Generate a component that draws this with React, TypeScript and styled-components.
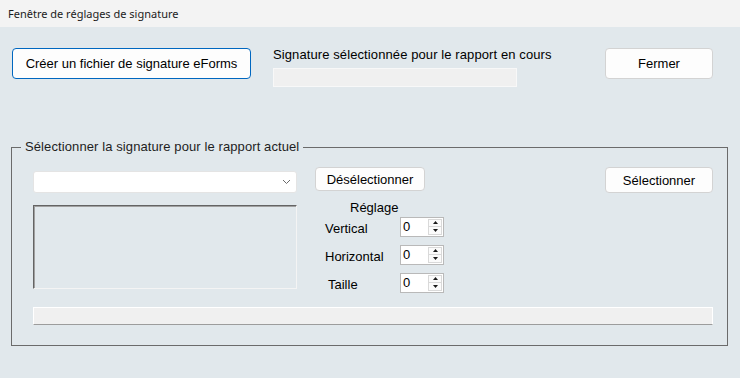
import React, { FC } from "react";
import styled, { createGlobalStyle } from "styled-components";

const GlobalStyle = createGlobalStyle`
  html, body {
    margin: 0;
    padding: 0;
    background: #e1e8ec;
  }
`;

const Window = styled.div`
  width: 740px;
  height: 378px;
  overflow: hidden;
  background: #e1e8ec;
  font-family: "Liberation Sans", Arial, sans-serif;
  font-size: 13px;
  color: #000;
`;

const TitleBar = styled.div`
  height: 27px;
  display: flex;
  align-items: center;
  padding-left: 8px;
  background: #f3f3f3;
  font-family: "Noto Sans", sans-serif;
  font-size: 11px;
  color: #1b1b1b;
`;

const Body = styled.div`
  padding: 21px 0 0 11px;
`;

const TopRow = styled.div`
  display: flex;
  align-items: flex-start;
  padding-left: 1px;
`;

const Button = styled.button<{ $w: number; $h: number; $focused?: boolean }>`
  box-sizing: border-box;
  width: ${(p) => p.$w}px;
  height: ${(p) => p.$h}px;
  padding: 0;
  background: #fdfdfd;
  border: 1px solid ${(p) => (p.$focused ? "#0067c0" : "#d3d3d3")};
  border-radius: 4px;
  font: inherit;
  color: #000;
  white-space: nowrap;
`;

const CurrentColumn = styled.div`
  display: flex;
  flex-direction: column;
  width: 244px;
  margin-left: 22px;
  margin-right: 88px;
`;

const Caption = styled.div`
  line-height: 14px;
  white-space: nowrap;
  letter-spacing: 0.1px;
`;

const ReadOnlyBox = styled.div`
  box-sizing: border-box;
  height: 19px;
  margin-top: 6px;
  background: #f0f0f0;
  border: 1px solid #f8f8f8;
`;

const Group = styled.fieldset`
  box-sizing: border-box;
  width: 717px;
  margin: 52px 0 0;
  padding: 0;
  border: 1px solid #6b6b6b;
`;

const Legend = styled.legend`
  margin-left: 9px;
  padding: 0 4px;
  line-height: 16px;
  color: #1e1e1e;
  letter-spacing: 0.1px;
`;

const GroupContent = styled.div`
  padding: 12px 14px 20px 21px;
`;

const MainRow = styled.div`
  display: flex;
  align-items: flex-start;
`;

const LeftColumn = styled.div`
  display: flex;
  flex-direction: column;
  width: 264px;
`;

const Combo = styled.div`
  box-sizing: border-box;
  height: 22px;
  margin-top: 4px;
  display: flex;
  align-items: center;
  justify-content: flex-end;
  padding-right: 5px;
  background: #fff;
  border: 1px solid #e4e4e4;
  border-radius: 3px;
`;

const PictureBox = styled.div`
  box-sizing: border-box;
  height: 84px;
  margin-top: 12px;
  border: 1px solid;
  border-color: #646464 #f4f4f4 #f4f4f4 #646464;
  box-shadow: inset 1px 1px 0 #a0a0a0;
`;

const MiddleColumn = styled.div`
  display: flex;
  flex-direction: column;
  width: 130px;
  margin-left: 18px;
`;

const SettingsTitle = styled.div`
  margin-top: 9px;
  padding-left: 35px;
  line-height: 15px;
`;

const SpinList = styled.div`
  display: flex;
  flex-direction: column;
  gap: 9px;
  margin-top: 2px;
`;

const SpinRow = styled.div`
  display: flex;
  align-items: center;
  height: 19px;
`;

const SpinLabel = styled.span<{ $indent: number }>`
  box-sizing: border-box;
  width: 85px;
  padding-left: ${(p) => p.$indent}px;
  padding-top: 4px;
`;

const SpinBox = styled.div`
  box-sizing: border-box;
  width: 44px;
  height: 20px;
  display: flex;
  align-items: stretch;
  background: #fff;
  border: 1px solid #b9b9b9;
`;

const SpinValue = styled.span`
  flex: 1;
  padding-left: 2px;
  line-height: 18px;
`;

const SpinButtons = styled.div`
  display: flex;
  flex-direction: column;
  width: 14px;
  margin: 1px 1px 1px 0;
`;

const SpinButton = styled.div`
  flex: 1;
  display: flex;
  align-items: center;
  justify-content: center;
  background: #fbfbfb;
  border: 1px solid #d9d9d9;

  & + & {
    border-top: none;
  }
`;

const RightSlot = styled.div`
  margin-left: auto;
`;

const StatusBar = styled.div`
  box-sizing: border-box;
  height: 18px;
  margin-top: 15px;
  background: #f0f0f0;
  border: 1px solid;
  border-color: #ffffff #ffffff #9c9c9c #ffffff;
`;

const Chevron: FC = () => (
  <svg width="9" height="6" viewBox="0 0 9 6">
    <polyline points="1,1 4.5,4.5 8,1" fill="none" stroke="#6a6a6a" strokeWidth="1" />
  </svg>
);

const Arrow: FC<{ up?: boolean }> = ({ up }) => (
  <svg width="5" height="3" viewBox="0 0 5 3">
    <polygon points={up ? "0,3 5,3 2.5,0" : "0,0 5,0 2.5,3"} fill="#1a1a1a" />
  </svg>
);

interface SpinProps {
  label: string;
  indent: number;
  value: number;
}

const Spin: FC<SpinProps> = ({ label, indent, value }) => (
  <SpinRow>
    <SpinLabel $indent={indent}>{label}</SpinLabel>
    <SpinBox>
      <SpinValue>{value}</SpinValue>
      <SpinButtons>
        <SpinButton>
          <Arrow up />
        </SpinButton>
        <SpinButton>
          <Arrow />
        </SpinButton>
      </SpinButtons>
    </SpinBox>
  </SpinRow>
);

const App: FC = () => {
  return (
    <Window>
      <GlobalStyle />
      <TitleBar>Fenêtre de réglages de signature</TitleBar>
      <Body>
        <TopRow>
          <Button $w={239} $h={31} $focused>
            Créer un fichier de signature eForms
          </Button>
          <CurrentColumn>
            <Caption>Signature sélectionnée pour le rapport en cours</Caption>
            <ReadOnlyBox />
          </CurrentColumn>
          <Button $w={108} $h={31}>
            Fermer
          </Button>
        </TopRow>

        <Group>
          <Legend>Sélectionner la signature pour le rapport actuel</Legend>
          <GroupContent>
            <MainRow>
              <LeftColumn>
                <Combo>
                  <Chevron />
                </Combo>
                <PictureBox />
              </LeftColumn>
              <MiddleColumn>
                <Button $w={110} $h={24}>
                  Désélectionner
                </Button>
                <SettingsTitle>Réglage</SettingsTitle>
                <SpinList>
                  <Spin label="Vertical" indent={10} value={0} />
                  <Spin label="Horizontal" indent={10} value={0} />
                  <Spin label="Taille" indent={13} value={0} />
                </SpinList>
              </MiddleColumn>
              <RightSlot>
                <Button $w={108} $h={26}>
                  Sélectionner
                </Button>
              </RightSlot>
            </MainRow>
            <StatusBar />
          </GroupContent>
        </Group>
      </Body>
    </Window>
  );
};

export default App;
